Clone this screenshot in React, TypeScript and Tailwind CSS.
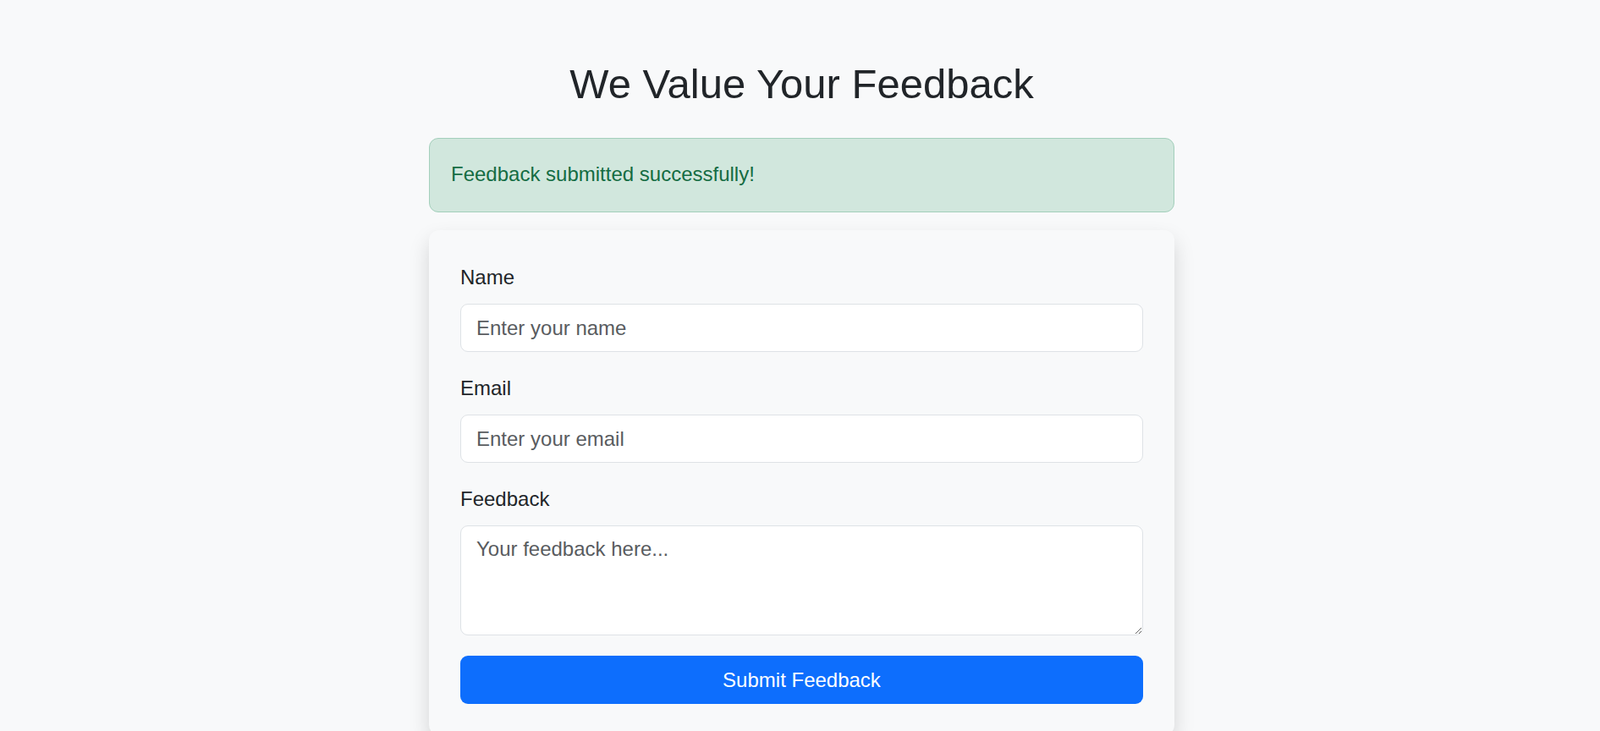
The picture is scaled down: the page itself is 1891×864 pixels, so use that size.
import React, { useState } from 'react';

export default function App() {
  const [name, setName] = useState('');
  const [email, setEmail] = useState('');
  const [feedback, setFeedback] = useState('');

  const handleSubmit = (e: React.FormEvent) => {
    e.preventDefault();
  };

  return (
    <div className="min-h-screen bg-[#f8f9fa] pl-[4px] font-['Liberation_Sans',Arial,sans-serif] text-[24px] leading-[36px] text-[#212529]">
      <div className="mx-auto w-[881px] pt-[70px]">
        <h1 className="mb-[34px] text-center text-[49px] leading-[59px] font-normal text-[#212529]">
          We Value Your Feedback
        </h1>

        {/* success alert */}
        <div className="mb-[21px] rounded-[11px] border border-[#a3cfbb] bg-[#d1e7dd] px-[25px] pt-[24px] pb-[26px] text-[#146c43]">
          Feedback submitted successfully!
        </div>

        {/* form card */}
        <div className="rounded-[12px] bg-[#f8f9fa] px-[37px] pt-[38px] pb-[37px] shadow-[0_12px_24px_rgba(0,0,0,0.15)]">
          <form onSubmit={handleSubmit}>
            <div className="mb-[25px]">
              <label className="mb-[13px] block">Name</label>
              <input
                type="text"
                value={name}
                onChange={(e) => setName(e.target.value)}
                placeholder="Enter your name"
                className="block h-[57px] w-full rounded-[9px] border border-[#dee2e6] bg-white px-[18px] py-[9px] text-[24px] leading-[36px] text-[#212529] outline-none placeholder:text-[#595c5f]"
              />
            </div>

            <div className="mb-[25px]">
              <label className="mb-[13px] block">Email</label>
              <input
                type="email"
                value={email}
                onChange={(e) => setEmail(e.target.value)}
                placeholder="Enter your email"
                className="block h-[57px] w-full rounded-[9px] border border-[#dee2e6] bg-white px-[18px] py-[9px] text-[24px] leading-[36px] text-[#212529] outline-none placeholder:text-[#595c5f]"
              />
            </div>

            <div className="mb-[24px]">
              <label className="mb-[13px] block">Feedback</label>
              <textarea
                rows={3}
                value={feedback}
                onChange={(e) => setFeedback(e.target.value)}
                placeholder="Your feedback here..."
                className="block h-[130px] w-full rounded-[9px] border border-[#dee2e6] bg-white px-[18px] py-[9px] text-[24px] leading-[36px] text-[#212529] outline-none placeholder:text-[#595c5f]"
              />
            </div>

            <button
              type="submit"
              className="block h-[57px] w-full rounded-[9px] bg-[#0d6efd] text-center text-[24px] leading-[36px] text-white"
            >
              Submit Feedback
            </button>
          </form>
        </div>
      </div>
    </div>
  );
}
